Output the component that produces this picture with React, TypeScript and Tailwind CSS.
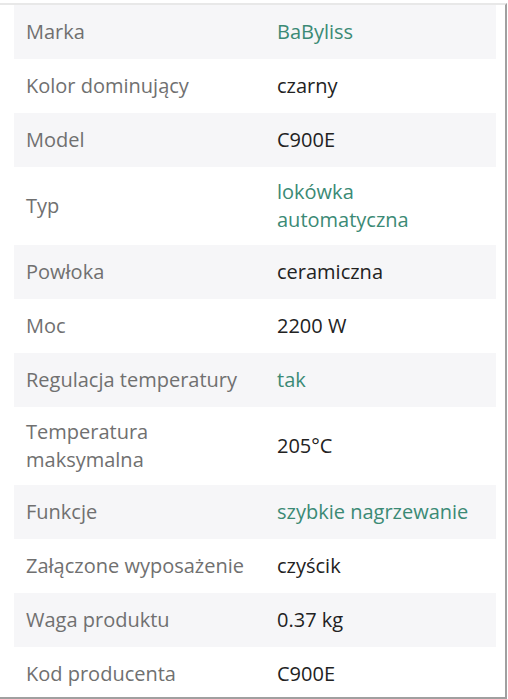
const rows: { label: string; value: string; link?: boolean }[] = [
  { label: "Marka", value: "BaByliss", link: true },
  { label: "Kolor dominujący", value: "czarny" },
  { label: "Model", value: "C900E" },
  { label: "Typ", value: "lokówka automatyczna", link: true },
  { label: "Powłoka", value: "ceramiczna" },
  { label: "Moc", value: "2200 W" },
  { label: "Regulacja temperatury", value: "tak", link: true },
  { label: "Temperatura maksymalna", value: "205°C" },
  { label: "Funkcje", value: "szybkie nagrzewanie", link: true },
  { label: "Załączone wyposażenie", value: "czyścik" },
  { label: "Waga produktu", value: "0.37 kg" },
  { label: "Kod producenta", value: "C900E" },
];

export default function App() {
  return (
    <div className="h-[699px] w-[508px] overflow-hidden bg-white pt-[3px] font-['Open_Sans',sans-serif]">
      <div className="h-[696px] w-[507px] overflow-hidden border-t-2 border-r-2 border-b-2 border-t-[#e8e8e8] border-r-[#a0a0a0] border-b-[#a0a0a0]">
        <div className="ml-[14px] w-[482px]">
          {rows.map((r, i) => (
            <div
              key={r.label}
              className={`grid min-h-[54px] grid-cols-[251px_1fr] items-center py-[11px] text-[20px] leading-[28px] ${
                i % 2 === 0 ? "bg-[#f6f6f8]" : "bg-white"
              }`}
            >
              <div className="px-3 text-[#707070]">{r.label}</div>
              <div className={`pl-3 pr-4 ${r.link ? "text-[#3b8a75]" : "text-[#222222]"}`}>{r.value}</div>
            </div>
          ))}
        </div>
      </div>
    </div>
  );
}
